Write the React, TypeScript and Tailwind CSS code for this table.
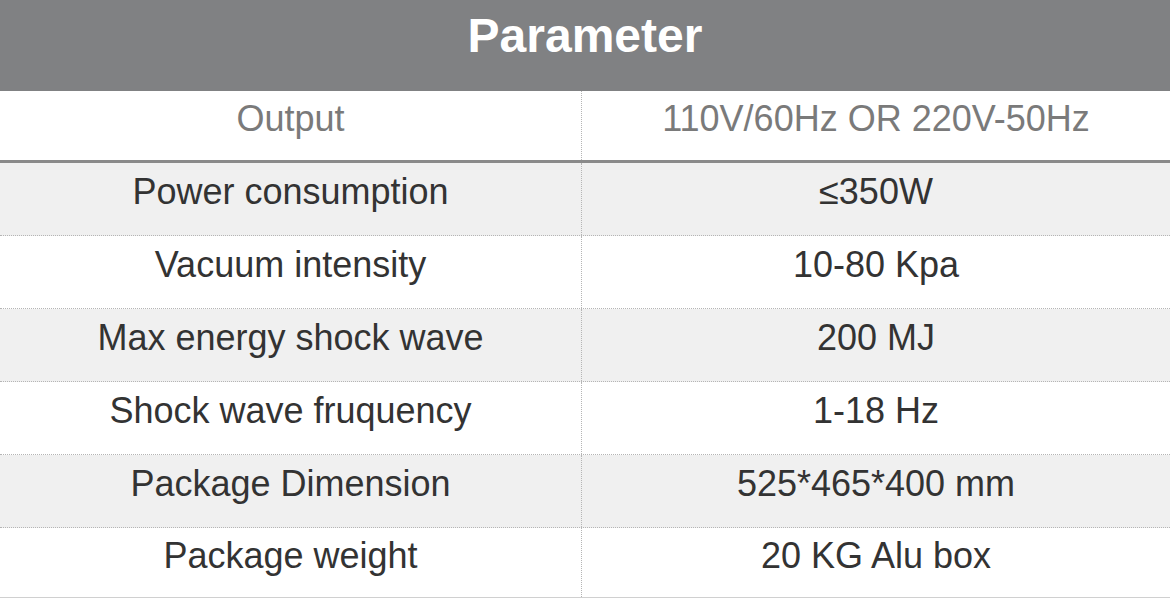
const rows: [string, string][] = [
  ["Power consumption", "≤350W"],
  ["Vacuum intensity", "10-80 Kpa"],
  ["Max energy shock wave", "200 MJ"],
  ["Shock wave fruquency", "1-18 Hz"],
  ["Package Dimension", "525*465*400 mm"],
  ["Package weight", "20 KG Alu box"],
];

export default function App() {
  return (
    <div
      className="w-[1170px] h-[599px] bg-white overflow-hidden"
      style={{ fontFamily: '"Liberation Sans", Arial, sans-serif' }}
    >
      <div className="h-[91px] bg-[#808183] flex items-center justify-center pb-[20px]">
        <h1 className="text-white font-bold text-[48px] leading-none">Parameter</h1>
      </div>
      <div className="flex h-[72px] border-b-[3px] border-[#8a8a8a] text-[#7a7a7a] text-[36px]">
        <div className="w-[582px] flex items-center justify-center pb-[14px] border-r border-dotted border-[#b5b5b5]">
          Output
        </div>
        <div className="flex-1 flex items-center justify-center pb-[14px]">
          110V/60Hz OR 220V-50Hz
        </div>
      </div>
      {rows.map(([k, v], i) => (
        <div
          key={k}
          className={`flex text-[#333333] text-[36px] ${i % 2 === 0 ? "bg-[#f0f0f0]" : "bg-white"} ${i < rows.length - 1 ? "h-[73px] border-b border-dotted border-[#b5b5b5]" : "h-[70px] border-b border-[#d0d0d0]"}`}
        >
          <div className="w-[582px] flex items-center justify-center pb-[14px] border-r border-dotted border-[#b5b5b5]">
            {k}
          </div>
          <div className="flex-1 flex items-center justify-center pb-[14px]">{v}</div>
        </div>
      ))}
    </div>
  );
}
